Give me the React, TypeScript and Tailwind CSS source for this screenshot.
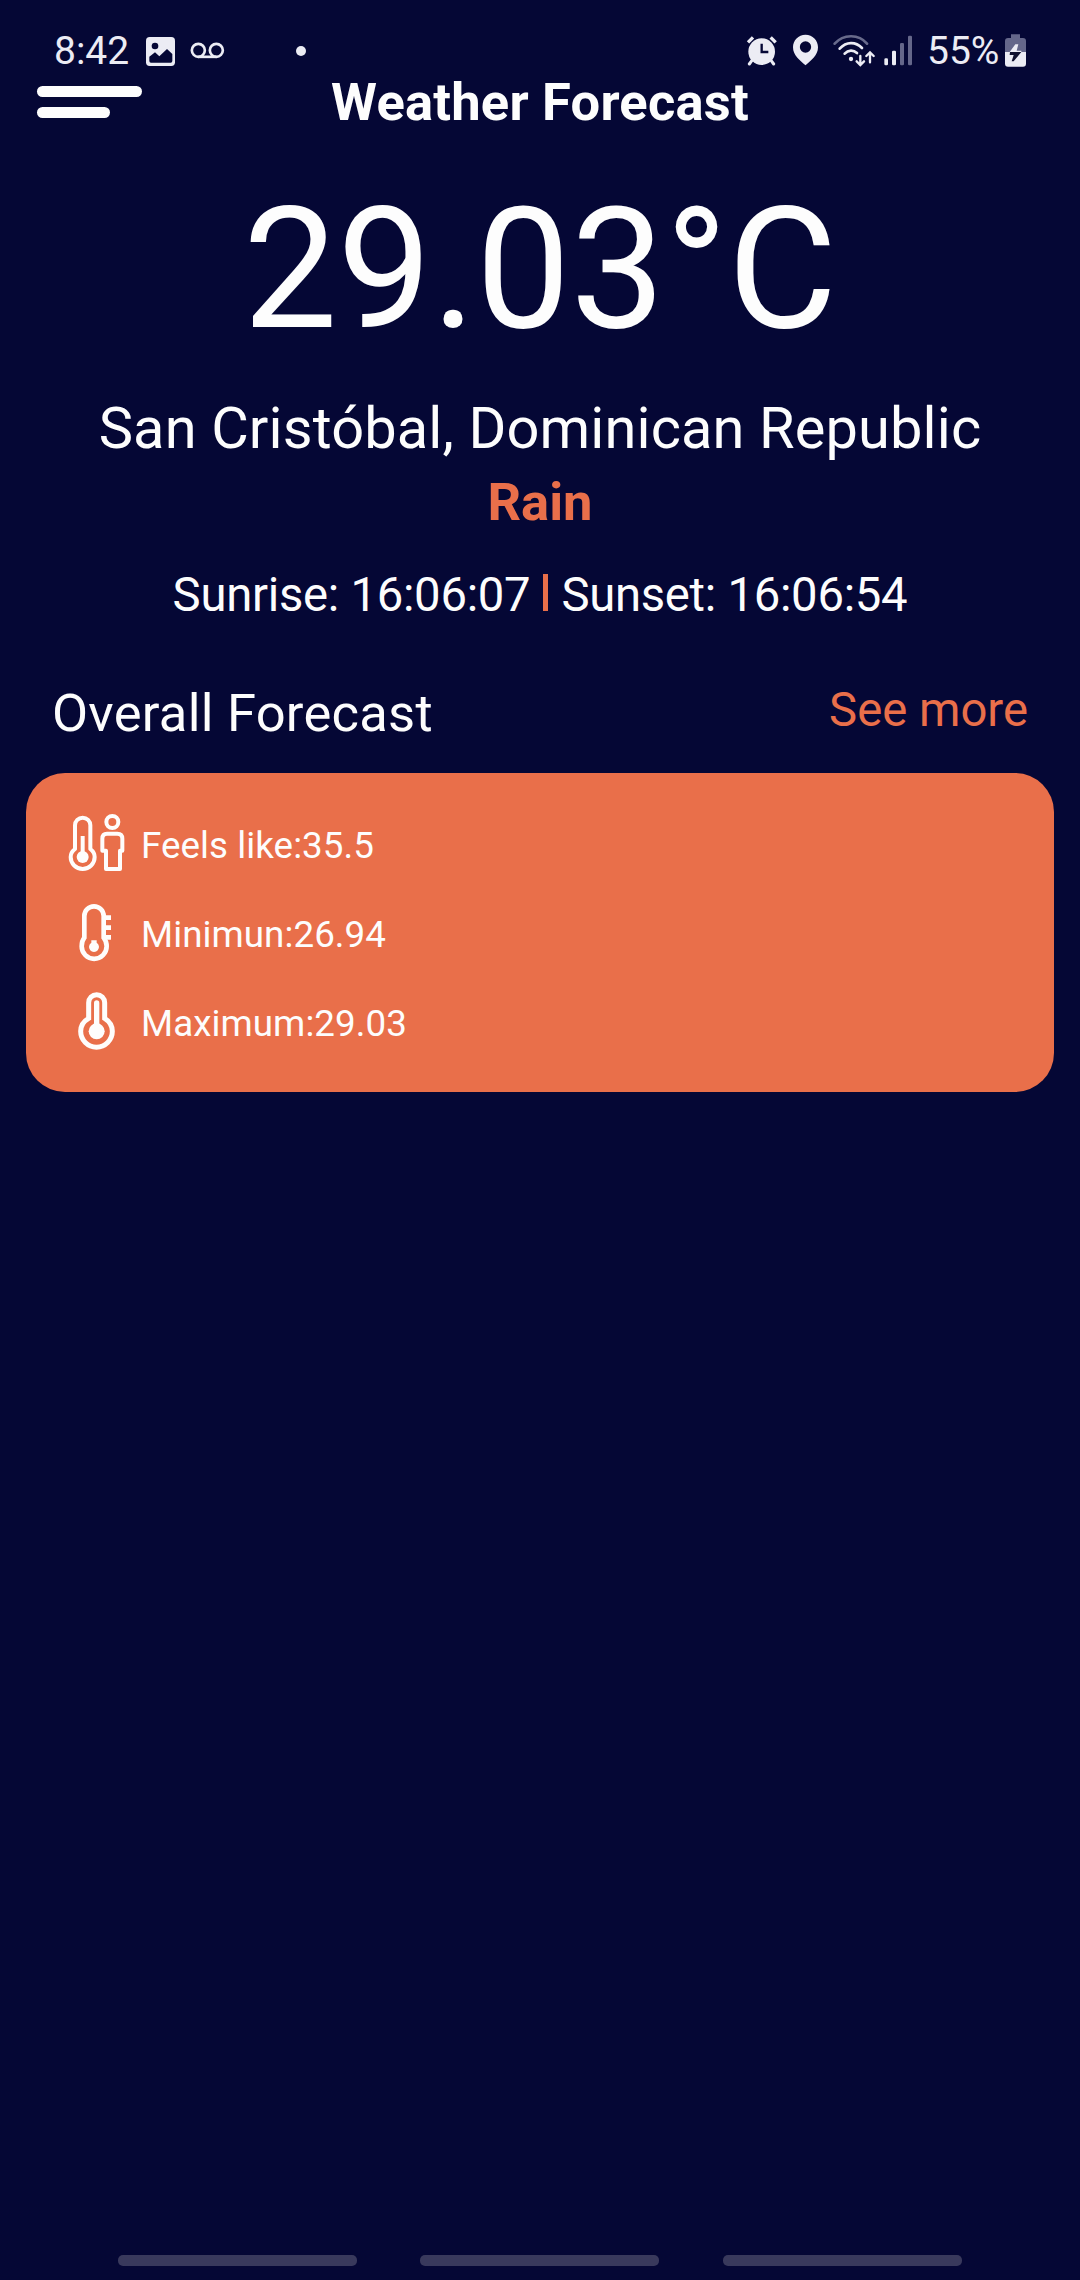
import React from "react";

function AlarmIcon() {
  return (
    <svg className="h-[45px] w-[31px]" viewBox="48 24 93 135" fill="none">
      <path d="M54 67 69 52M137 67 122 52" stroke="#ececf4" strokeWidth="10" />
      <path d="m66 121-8 11M123 121l8 11" stroke="#ececf4" strokeWidth="9" strokeLinecap="round" />
      <circle cx="95" cy="95" r="40" fill="#ececf4" />
      <path d="M95 71V96H115" stroke="#050735" strokeWidth="7" />
    </svg>
  );
}

function PinIcon() {
  return (
    <svg className="h-[45px] w-[27px]" viewBox="186 24 81 135">
      <path
        fill="#ececf4"
        fillRule="evenodd"
        d="M226.500 44C205 44 189 61 189 82c0 25 21 39 37.500 54C243 121 264 107 264 82 264 61 248 44 226.500 44ZM226.500 64a17 17 0 1 1 0 34 17 17 0 0 1 0-34Z"
      />
    </svg>
  );
}

function WifiIcon() {
  return (
    <svg className="h-[45px] w-[42px]" viewBox="309 24 126 135" fill="none" strokeLinecap="round">
      <path d="M314 71C340 42 386 41 411 71" stroke="#686a8b" strokeWidth="8" />
      <path d="M329 86C349 64 377 64 396 84M344 101C355 89 370 89 381 99" stroke="#ececf4" strokeWidth="8" />
      <circle cx="363" cy="117" r="6.500" fill="#ececf4" />
      <path d="M391 108V134M380 124l11 11 11-11M420 127V98M409 108l11-11 11 11" stroke="#ececf4" strokeWidth="7" />
    </svg>
  );
}

function SignalIcon() {
  return (
    <svg className="h-[45px] w-[29px]" viewBox="462 24 87 135">
      <rect x="463" y="115" width="11" height="21" rx="4" fill="#ececf4" />
      <rect x="486" y="92" width="12" height="44" rx="4" fill="#ececf4" />
      <rect x="510" y="69" width="12" height="67" rx="4" fill="#65678a" />
      <rect x="534" y="47" width="12" height="89" rx="4" fill="#65678a" />
    </svg>
  );
}

function BatteryIcon() {
  return (
    <svg className="h-[45px] w-[21px]" viewBox="825 24 63 135">
      <path d="M843 43h27v11h9q9 0 9 9v33h-63V63q0-9 9-9h9Z" fill="#65678a" />
      <path d="M825 96h63v35q0 9-9 9h-45q-9 0-9-9Z" fill="#ececf4" />
      <path d="M856 73h9l-5 19h14v4h-35Z" fill="#ececf4" />
      <path d="M840 96h34l-23 28h-6l6-19h-12Z" fill="#10112f" />
    </svg>
  );
}

function StatusBar() {
  return (
    <div className="flex h-[73px] items-end justify-between pr-[54px] pl-[54px] text-[39px] leading-[47px] text-[#ececf4]">
      <div className="flex">
        <span className="h-[45px] w-[92px]">8:42</span>
        <svg className="h-[45px] w-[30px]" viewBox="348 24 90 135">
          <rect x="348" y="51" width="87" height="87" rx="11" fill="#ececf4" />
          <circle cx="375" cy="78" r="10" fill="#050735" />
          <path d="M358 110 375 97l13 12 23-22 16 15v21q0 5-5 5h-59q-5 0-5-5Z" fill="#050735" />
        </svg>
        <svg className="ml-[14px] h-[45px] w-[35px]" viewBox="480 24 105 135" fill="none" stroke="#ececf4" strokeWidth="8">
          <circle cx="505" cy="91" r="19.500" />
          <circle cx="559" cy="91" r="19.500" />
          <path d="M505 110.500H559" />
        </svg>
        <svg className="ml-[71px] h-[45px] w-[10px]" viewBox="798 24 30 135">
          <circle cx="813" cy="93" r="15" fill="#ececf4" />
        </svg>
      </div>
      <div className="flex">
        <AlarmIcon />
        <div className="w-[15px]" />
        <PinIcon />
        <div className="w-[14px]" />
        <WifiIcon />
        <div className="w-[9px]" />
        <SignalIcon />
        <span className="ml-[14px] h-[45px] w-[78px] whitespace-nowrap">55%</span>
        <BatteryIcon />
      </div>
    </div>
  );
}

function FeelsLikeIcon() {
  return (
    <svg className="h-[89px] w-[70px]" viewBox="30 3 210 267" fill="none" stroke="#fefdfc">
      <path d="M75 147V76a23 23 0 0 1 46 0v71c8 6 13 14 13 24a36 36 0 0 1-72 0c0-10 5-18 13-24Z" strokeWidth="12" strokeLinejoin="round" />
      <path d="M98 108v60" strokeWidth="12" />
      <circle cx="98" cy="171" r="18" fill="#fefdfc" stroke="none" />
      <circle cx="187" cy="66" r="18" strokeWidth="12" />
      <path d="M171 101h31q15 0 15 15v36h-7v55h-42v-55h-11v-36q0-15 14-15Z" strokeWidth="12" strokeLinejoin="round" />
    </svg>
  );
}

function MinimumIcon() {
  return (
    <svg className="h-[89px] w-[70px]" viewBox="30 270 210 267" fill="none" stroke="#fefdfc">
      <path d="M103 413v-65a29 29 0 0 1 58 0v65c6 7 9 15 9 26a37.500 37.500 0 0 1-75 0c0-11 2-19 8-26Z" strokeWidth="14" />
      <path d="M164 353h19M164 383h19M164 412h19" strokeWidth="14" />
      <path d="M124 421h16v7a15 15 0 1 1-16 0Z" fill="#fefdfc" stroke="none" />
    </svg>
  );
}

function MaximumIcon() {
  return (
    <svg className="h-[89px] w-[70px]" viewBox="30 537 210 267" fill="none" stroke="#fefdfc">
      <path d="M116 655v-47a24 24 0 0 1 48 0v47c13 8 23 22 23 39a47.500 47.500 0 0 1-95 0c0-17 10-31 24-39Z" strokeWidth="15" />
      <path d="M140 609v75" strokeWidth="16" strokeLinecap="round" />
      <circle cx="140" cy="694" r="24" fill="#fefdfc" stroke="none" />
    </svg>
  );
}

function ForecastRow({ icon, label }: { icon: React.ReactNode; label: string }) {
  return (
    <div className="flex h-[89px] items-center gap-[11px] text-[36.75px] leading-[89px] tracking-[0.06px]">
      {icon}
      <span>{label}</span>
    </div>
  );
}

export default function App() {
  return (
    <div className="flex h-[2280px] w-[1080px] flex-col overflow-hidden bg-[#050735] font-['Roboto',sans-serif] text-[#fdfdfd]">
      <StatusBar />
      <header className="grid h-[60px] grid-cols-[1fr_auto_1fr]">
        <div className="flex flex-col gap-[10px] pt-[13px] pl-[36.5px]">
          <div className="h-[11px] w-[105px] rounded-full bg-[#fdfdfd]" />
          <div className="h-[11px] w-[73.5px] rounded-full bg-[#fdfdfd]" />
        </div>
        <h1 className="text-[52.5px] leading-[58px] font-bold tracking-[0.2px]">Weather Forecast</h1>
      </header>
      <main className="flex flex-col">
        <div className="mt-[37px] text-center text-[168px] leading-[200px]">29.03°C</div>
        <div className="mt-[24px] text-center text-[57.75px] leading-[68px] tracking-[0.13px]">San Cristóbal, Dominican Republic</div>
        <div className="mt-[10px] text-center text-[52.5px] leading-[60px] font-bold text-[#e96f4a]">Rain</div>
        <div className="mt-[35px] flex justify-center text-[47.25px] leading-[56px] tracking-[-0.28px]">
          <span>Sunrise: 16:06:07</span>
          <span className="mt-[7px] mr-[13px] ml-[13px] h-[37px] w-[5px] bg-[#e96f4a]" />
          <span>Sunset: 16:06:54</span>
        </div>
        <div className="mt-[59px] flex items-start justify-between pr-[52px] pl-[52px]">
          <h2 className="mt-[1px] h-[61px] text-[52.5px] leading-[60px] tracking-[0.25px]">Overall Forecast</h2>
          <a className="text-[47.25px] leading-[56px] text-[#e96f4a]">See more</a>
        </div>
        <section className="mx-[26px] mt-[29px] h-[319px] rounded-[39px] bg-[#e96f4a] pt-[28px] pl-[34px]">
          <ForecastRow icon={<FeelsLikeIcon />} label="Feels like:35.5" />
          <ForecastRow icon={<MinimumIcon />} label="Minimun:26.94" />
          <ForecastRow icon={<MaximumIcon />} label="Maximum:29.03" />
        </section>
      </main>
      <nav className="mt-auto flex gap-[63px] pb-[14px] pl-[118px]">
        <div className="h-[11px] w-[239px] rounded-[5px] bg-[#39395c]" />
        <div className="h-[11px] w-[239px] rounded-[5px] bg-[#39395c]" />
        <div className="ml-[1px] h-[11px] w-[239px] rounded-[5px] bg-[#39395c]" />
      </nav>
    </div>
  );
}
